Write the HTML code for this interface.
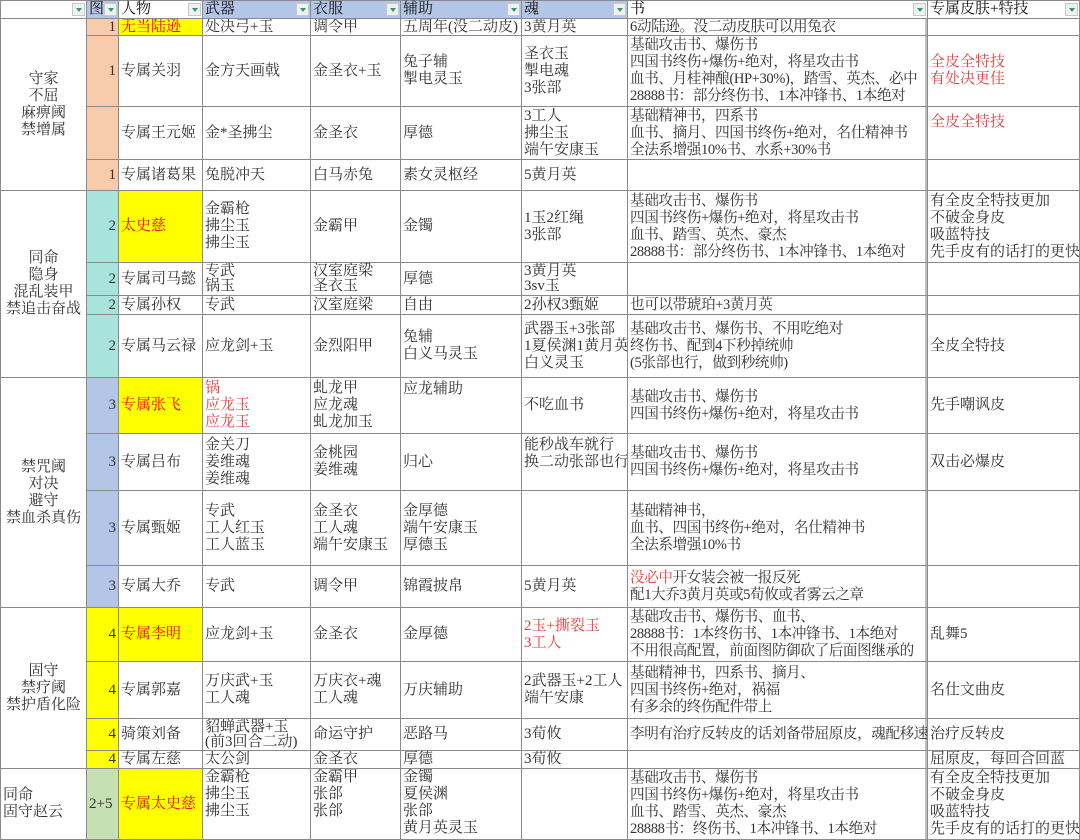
<!DOCTYPE html>
<html><head><meta charset="utf-8"><style>
body{margin:0;background:#fff;width:1080px;height:839px;overflow:hidden}
table{width:1079px;border-collapse:collapse;table-layout:fixed;font-family:"Liberation Serif","Noto Serif CJK SC",serif;font-size:15px;line-height:17px;color:#333}
td{border:1px solid #8a8a8a;padding:0 0 0 2px;vertical-align:middle;white-space:nowrap;overflow:hidden}
th{border:1px solid #8a8a8a;font-weight:normal;text-align:left;padding:0 0 0 2px;position:relative;font-size:15px;line-height:15px;color:#111}
th.b{background:#b4c6e7}
tr.k td{line-height:15px}
.dd{position:absolute;right:1px;top:2px;width:13px;height:13px;background:#f0f0f0;border:1px solid #c8c8c8;box-sizing:border-box}
.dd:after{content:"";position:absolute;left:3px;top:4px;border-left:3px solid transparent;border-right:3px solid transparent;border-top:4px solid #2e9a6e}
.g{text-align:center;padding:0}
.n{text-align:right;padding-right:2px}
.p{background:#f8cbad}.t{background:#a9e4dc}.l{background:#b4c6e7}.y{background:#ffff00}.gr{background:#c6e0b4}
.r{color:#ff0000}.rr{color:#ee3b3b}
.top{vertical-align:top}
.sk{box-shadow:inset -2px 0 #c0c0c0;font-size:14.6px;letter-spacing:-0.4px}
</style></head><body>
<table>
<colgroup><col style="width:86px"><col style="width:32px"><col style="width:84px"><col style="width:108px"><col style="width:90px"><col style="width:121px"><col style="width:106px"><col style="width:300px"><col style="width:152px"></colgroup>
<tr style="height:18px"><th><span class="dd"></span></th><th class="b">图<span class="dd"></span></th><th>人物<span class="dd"></span></th><th class="b">武器<span class="dd"></span></th><th class="b">衣服<span class="dd"></span></th><th class="b">辅助<span class="dd"></span></th><th class="b">魂<span class="dd"></span></th><th>书<span class="dd"></span></th><th>专属皮肤+特技<span class="dd"></span></th></tr>
<tr class="k" style="height:17px"><td rowspan="4" class="g" style="line-height:17px">守家<br>不屈<br>麻痹阈<br>禁增属</td><td class="p n">1</td><td class="y r">无当陆逊</td><td>处决弓+玉</td><td>调令甲</td><td>五周年(没二动皮)</td><td>3黄月英</td><td class="sk">6动陆逊。没二动皮肤可以用兔衣</td><td></td></tr>
<tr style="height:71px"><td class="p n">1</td><td>专属关羽</td><td>金方天画戟</td><td>金圣衣+玉</td><td>兔子辅<br>掣电灵玉</td><td>圣衣玉<br>掣电魂<br>3张部</td><td class="sk">基础攻击书、爆伤书<br>四国书终伤+爆伤+绝对，将星攻击书<br>血书、月桂神酿(HP+30%)，踏雪、英杰、必中<br>28888书：部分终伤书、1本冲锋书、1本绝对</td><td class="rr">全皮全特技<br>有处决更佳</td></tr>
<tr style="height:53px"><td class="p"></td><td>专属王元姬</td><td>金*圣拂尘</td><td>金圣衣</td><td>厚德</td><td>3工人<br>拂尘玉<br>端午安康玉</td><td class="sk">基础精神书，四系书<br>血书、摘月、四国书终伤+绝对，名仕精神书<br>全法系增强10%书、水系+30%书</td><td class="rr top" style="padding-top:7px">全皮全特技</td></tr>
<tr style="height:31px"><td class="p n">1</td><td>专属诸葛果</td><td>兔脱冲天</td><td>白马赤兔</td><td>素女灵枢经</td><td>5黄月英</td><td class="sk"></td><td></td></tr>
<tr style="height:72px"><td rowspan="4" class="g">同命<br>隐身<br>混乱装甲<br>禁追击奋战</td><td class="t n">2</td><td class="y r">太史慈</td><td>金霸枪<br>拂尘玉<br>拂尘玉</td><td>金霸甲</td><td>金镯</td><td>1玉2红绳<br>3张部</td><td class="sk">基础攻击书、爆伤书<br>四国书终伤+爆伤+绝对，将星攻击书<br>血书、踏雪、英杰、豪杰<br>28888书：部分终伤书、1本冲锋书、1本绝对</td><td>有全皮全特技更加<br>不破金身皮<br>吸蓝特技<br>先手皮有的话打的更快</td></tr>
<tr class="k" style="height:33px"><td class="t n">2</td><td>专属司马懿</td><td>专武<br>锅玉</td><td>汉室庭梁<br>圣衣玉</td><td>厚德</td><td>3黄月英<br>3sv玉</td><td class="sk"></td><td></td></tr>
<tr class="k" style="height:19px"><td class="t n">2</td><td>专属孙权</td><td>专武</td><td>汉室庭梁</td><td>自由</td><td>2孙权3甄姬</td><td class="sk">也可以带琥珀+3黄月英</td><td></td></tr>
<tr style="height:63px"><td class="t n">2</td><td>专属马云禄</td><td>应龙剑+玉</td><td>金烈阳甲</td><td>兔辅<br>白义马灵玉</td><td>武器玉+3张部<br>1夏侯渊1黄月英<br>白义灵玉</td><td class="sk">基础攻击书、爆伤书、不用吃绝对<br>终伤书、配到4下秒掉统帅<br>(5张部也行，做到秒统帅)</td><td>全皮全特技</td></tr>
<tr style="height:56px"><td rowspan="4" class="g">禁咒阈<br>对决<br>避守<br>禁血杀真伤</td><td class="l n">3</td><td class="y r">专属张飞</td><td class="rr">锅<br>应龙玉<br>应龙玉</td><td>虬龙甲<br>应龙魂<br>虬龙加玉</td><td class="top" style="padding-top:3px">应龙辅助</td><td>不吃血书</td><td class="sk">基础攻击书、爆伤书<br>四国书终伤+爆伤+绝对，将星攻击书</td><td>先手嘲讽皮</td></tr>
<tr style="height:57px"><td class="l n">3</td><td>专属吕布</td><td>金关刀<br>姜维魂<br>姜维魂</td><td>金桃园<br>姜维魂</td><td>归心</td><td class="top" style="padding-top:3px">能秒战车就行<br>换二动张部也行</td><td class="sk">基础攻击书、爆伤书<br>四国书终伤+爆伤+绝对，将星攻击书</td><td>双击必爆皮</td></tr>
<tr style="height:75px"><td class="l n">3</td><td>专属甄姬</td><td>专武<br>工人红玉<br>工人蓝玉</td><td>金圣衣<br>工人魂<br>端午安康玉</td><td>金厚德<br>端午安康玉<br>厚德玉</td><td></td><td class="sk">基础精神书，<br>血书、四国书终伤+绝对，名仕精神书<br>全法系增强10%书</td><td></td></tr>
<tr style="height:42px"><td class="l n">3</td><td>专属大乔</td><td>专武</td><td>调令甲</td><td>锦霞披帛</td><td>5黄月英</td><td class="sk"><span class="rr">没必中</span>开女装会被一报反死<br>配1大乔3黄月英或5荀攸或者雾云之章</td><td></td></tr>
<tr style="height:54px"><td rowspan="4" class="g">固守<br>禁疗阈<br>禁护盾化险</td><td class="y n">4</td><td class="y r">专属李明</td><td>应龙剑+玉</td><td>金圣衣</td><td>金厚德</td><td class="rr">2玉+撕裂玉<br>3工人</td><td class="sk">基础攻击书、爆伤书、血书、<br>28888书：1本终伤书、1本冲锋书、1本绝对<br>不用很高配置，前面图防御砍了后面图继承的</td><td>乱舞5</td></tr>
<tr style="height:57px"><td class="y n">4</td><td>专属郭嘉</td><td>万庆武+玉<br>工人魂</td><td>万庆衣+魂<br>工人魂</td><td>万庆辅助</td><td>2武器玉+2工人<br>端午安康</td><td class="sk">基础精神书，四系书、摘月、<br>四国书终伤+绝对，祸福<br>有多余的终伤配件带上</td><td>名仕文曲皮</td></tr>
<tr class="k" style="height:32px"><td class="y n">4</td><td>骑策刘备</td><td>貂蝉武器+玉<br>(前3回合二动)</td><td>命运守护</td><td>恶路马</td><td>3荀攸</td><td class="sk">李明有治疗反转皮的话刘备带屈原皮，魂配移速</td><td>治疗反转皮</td></tr>
<tr class="k" style="height:18px"><td class="y n">4</td><td>专属左慈</td><td>太公剑</td><td>金圣衣</td><td>厚德</td><td>3荀攸</td><td class="sk"></td><td>屈原皮，每回合回蓝</td></tr>
<tr style="height:71px"><td style="text-align:left">同命<br>固守赵云</td><td class="gr" style="padding:0 0 0 2px">2+5</td><td class="y r">专属太史慈</td><td class="top">金霸枪<br>拂尘玉<br>拂尘玉</td><td class="top">金霸甲<br>张郃<br>张郃</td><td class="top">金镯<br>夏侯渊<br>张郃<br>黄月英灵玉</td><td></td><td class="sk">基础攻击书、爆伤书<br>四国书终伤+爆伤+绝对，将星攻击书<br>血书、踏雪、英杰、豪杰<br>28888书：终伤书、1本冲锋书、1本绝对</td><td>有全皮全特技更加<br>不破金身皮<br>吸蓝特技<br>先手皮有的话打的更快</td></tr>
</table>
</body></html>
